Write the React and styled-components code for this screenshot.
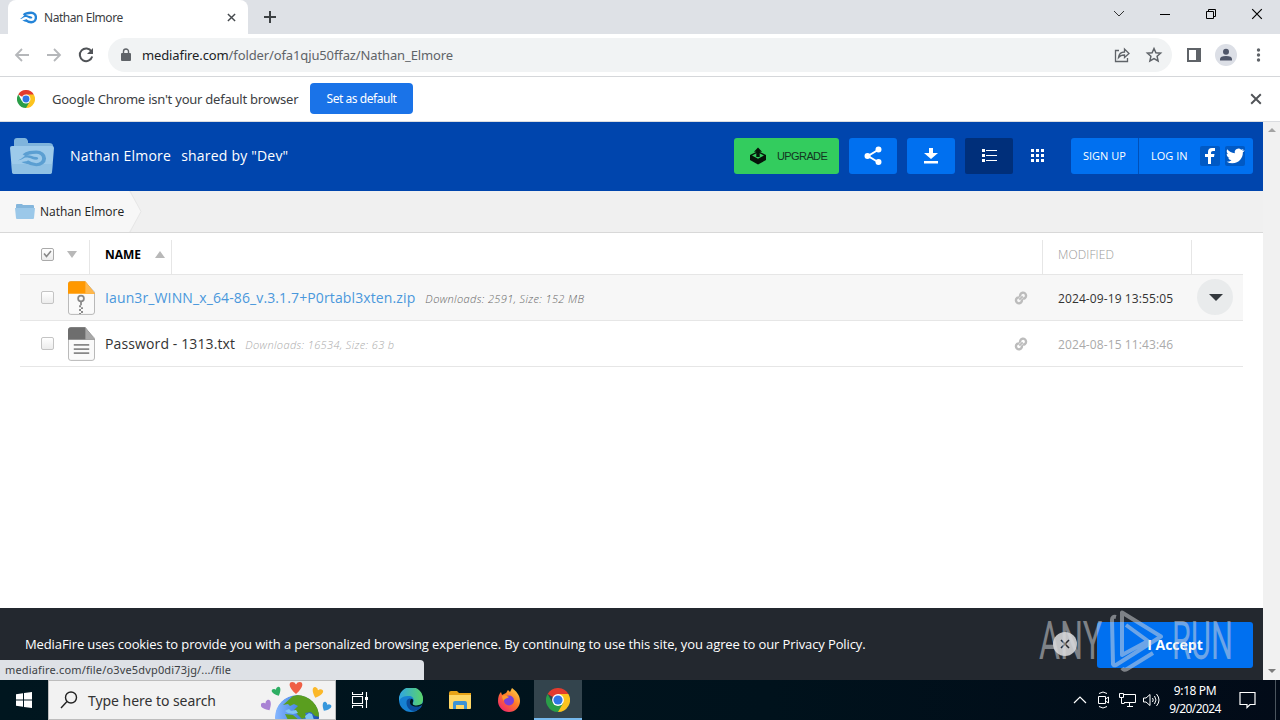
import styled, { createGlobalStyle } from "styled-components";

const GlobalStyle = createGlobalStyle`
  * {
    box-sizing: border-box;
  }

  body {
    margin: 0;
    overflow: hidden;
    font-family: "Open Sans", "Noto Sans", sans-serif;
  }

  button {
    border: 0;
    padding: 0;
    background: none;
    font: inherit;
    color: inherit;
  }

  svg {
    flex-shrink: 0;
  }
`;

const Desktop = styled.div`
  position: relative;
  display: flex;
  flex-direction: column;
  width: 1280px;
  height: 720px;
  background: white;
`;

const Text = styled.span`
  font-size: ${(p) => p.$size || 13}px;
  letter-spacing: ${(p) => p.$spacing || 0}px;
  white-space: nowrap;
`;

/* browser frame */

const TabStrip = styled.div`
  display: flex;
  height: 34px;
  padding-left: 8px;
  background: #dee1e6;
  font-family: "Noto Sans", sans-serif;
`;

const Tab = styled.div`
  display: flex;
  align-items: center;
  width: 240px;
  padding: 0 12px;
  border-radius: 8px 8px 0 0;
  background: white;
  color: #3c4043;

  span {
    flex: 1;
    margin-left: 7px;
  }
`;

const NewTab = styled.button`
  display: flex;
  align-items: center;
  margin-left: 16px;
`;

const WindowControls = styled.div`
  display: flex;
  align-items: center;
  gap: 34px;
  height: 28px;
  margin-left: auto;
  padding-right: 17px;
`;

const Toolbar = styled.div`
  display: flex;
  align-items: center;
  height: 43px;
  padding: 0 11px 1px 13px;
  border-bottom: 1px solid #d5d7da;
  background: white;
  font-family: "Noto Sans", sans-serif;
`;

const NavButtons = styled.div`
  display: flex;
  gap: 14px;
  width: 95px;
`;

const Omnibox = styled.div`
  display: flex;
  align-items: center;
  width: 1064px;
  height: 34px;
  padding: 0 9px 0 10px;
  border-radius: 17px;
  background: #f1f3f4;
  color: #5f6368;

  b {
    font-weight: 400;
    color: #202124;
  }
`;

const Url = styled(Text)`
  flex: 1;
  margin-left: 8px;
`;

const OmniboxActions = styled.div`
  display: flex;
  gap: 14px;
`;

const ToolbarActions = styled.div`
  display: flex;
  align-items: center;
  gap: 12px;
  margin-left: 13px;
`;

const InfoBar = styled.div`
  display: flex;
  align-items: center;
  height: 45px;
  padding: 0 18px 1px 17px;
  border-bottom: 1px solid #dadce0;
  color: #3c4043;
  font-family: "Noto Sans", sans-serif;
`;

const InfoText = styled(Text)`
  width: 258px;
  margin-left: 17px;
`;

const DefaultButton = styled.button`
  width: 103px;
  height: 31px;
  margin-right: auto;
  padding-bottom: 2px;
  border-radius: 4px;
  background: #1a73e8;
  color: white;
  line-height: 27px;
`;

const Viewport = styled.div`
  display: flex;
  flex: 1;
  min-height: 0;
`;

const Page = styled.main`
  display: flex;
  flex-direction: column;
  width: 1263px;
  background: white;
`;

const Scrollbar = styled.div`
  display: flex;
  flex-direction: column;
  justify-content: space-between;
  align-items: center;
  width: 17px;
  padding: 6px 0 7px;
  background: #f1f1f1;
`;

/* shared folder page */

const Header = styled.header`
  display: flex;
  align-items: center;
  height: 69px;
  padding: 0 10px 1px;
  background: #0045ad;
  color: white;
`;

const FolderTitle = styled.h1`
  display: flex;
  flex: 1;
  gap: 10px;
  margin: 0 0 1px 15px;
  font-weight: 400;
  line-height: 20px;
`;

const HeaderButton = styled.button`
  display: flex;
  align-items: center;
  justify-content: center;
  gap: 10px;
  width: ${(p) => p.$width || 48}px;
  height: 36px;
  margin-right: ${(p) => p.$gap ?? 10}px;
  border-radius: ${(p) => p.$radius ?? 3}px;
  background: ${(p) => p.$bg || "#0070f0"};
  color: ${(p) => p.$color || "white"};
`;

const UpgradeButton = styled(HeaderButton)`
  justify-content: flex-start;
  padding-left: 15px;
  font-family: "Liberation Sans", Arial, sans-serif;
`;

const Account = styled.div`
  display: flex;
  width: 182px;
  height: 36px;
  border-radius: 3px;
  background: #0070f0;
`;

const SignUp = styled.button`
  display: flex;
  align-items: center;
  width: 68px;
  padding: 0 0 1px 12px;
  border-right: 1px solid #0050b8;
`;

const LogIn = styled.div`
  display: flex;
  flex: 1;
  align-items: center;
  padding-left: 12px;

  span {
    width: 49px;
    padding-bottom: 1px;
  }

  svg + svg {
    margin-left: 5px;
  }
`;

const Breadcrumb = styled.nav`
  display: flex;
  height: 42px;
  border-bottom: 1px solid #d8d8d8;
  background: #f0f0f0;
`;

const Crumb = styled.div`
  display: flex;
  align-items: center;
  width: 129px;
  padding-left: 15px;
  background: #f7f7f7;
  color: #222;

  span {
    margin-left: 5px;
  }
`;

const FileList = styled.section`
  flex: 1;
  padding: 0 20px;
`;

const Row = styled.div`
  display: flex;
  align-items: center;
  height: ${(p) => (p.$head ? 42 : 46)}px;
  border-bottom: 1px solid #e6e6e6;
  background: ${(p) => (p.$active ? "#f7f7f7" : "white")};

  > svg:nth-child(2) {
    margin: 1px 1px 0 0;
  }
`;

const CheckCell = styled.div`
  display: flex;
  align-items: center;
  gap: 13px;
  width: ${(p) => p.$width}px;
  height: ${(p) => (p.$divider ? "34px" : "auto")};
  align-self: ${(p) => (p.$divider ? "flex-end" : "auto")};
  padding: ${(p) => (p.$divider ? "0 0 6px 21px" : "0 0 0 21px")};
  border-right: ${(p) => (p.$divider ? "1px solid #e6e6e6" : "0")};
`;

const Checkbox = styled.span`
  display: flex;
  align-items: center;
  justify-content: center;
  width: 13px;
  height: 13px;
  border: 1px solid ${(p) => (p.$checked ? "#aaa" : "#c4c4c4")};
  border-radius: 2px;
  background: linear-gradient(#fff, #ececec);
`;

const Triangle = styled.i`
  width: 0;
  height: 0;
  border: solid transparent;
  border-width: 0 ${(p) => p.$half || 5}px;
  border-${(p) => (p.$up ? "bottom" : "top")}: ${(p) => p.$height || 7}px solid ${(p) => p.$color || "#b8b8b8"};
`;

const NameHead = styled.div`
  display: flex;
  align-items: center;
  align-self: flex-end;
  justify-content: space-between;
  width: 82px;
  height: 34px;
  padding: 0 6px 6px 15px;
  border-right: 1px solid #e6e6e6;
  color: black;
  font-weight: 700;
`;

const ModifiedHead = styled.div`
  display: flex;
  align-items: center;
  align-self: flex-end;
  width: 150px;
  height: 34px;
  margin: 0 51px 0 auto;
  padding: 0 0 6px 15px;
  border: solid #e6e6e6;
  border-width: 0 1px;
  color: #999;
  font-weight: 300;
`;

const FileName = styled(Text)`
  margin: 0 10px 0 9px;
  color: ${(p) => p.$color};
`;

const FileInfo = styled(Text)`
  flex: 1;
  margin-top: 2px;
  color: ${(p) => p.$color};
  font-style: italic;
  font-weight: 300;
`;

const Modified = styled(Text)`
  width: 139px;
  margin-left: 30px;
  padding-top: 1px;
  color: ${(p) => p.$color};
`;

const MenuCell = styled.div`
  width: 46px;
  padding-bottom: 1px;
`;

const MenuButton = styled.button`
  display: flex;
  align-items: center;
  justify-content: center;
  width: 36px;
  height: 36px;
  padding: 1px 0 0 1px;
  border-radius: 50%;
  background: #e9ebec;
`;

const CookieBar = styled.footer`
  display: flex;
  align-items: center;
  height: 72px;
  padding: 1px 10px 0 25px;
  background: #23282f;
  color: white;
`;

const CookieText = styled(Text)`
  flex: 1;
  padding-bottom: 2px;
`;

const CookieClose = styled.button`
  display: flex;
  align-items: center;
  justify-content: center;
  width: 24px;
  height: 24px;
  margin: 0 20px 1px 0;
  border-radius: 50%;
  background: #c3c4c6;
`;

const Accept = styled.button`
  width: 156px;
  height: 46px;
  padding-bottom: 2px;
  border-radius: 3px;
  background: #0070f0;
  font-weight: 700;
`;

/* floats over the bottom left corner of the page */
const StatusBubble = styled.div`
  position: absolute;
  left: 0;
  bottom: 40px;
  width: 424px;
  height: 20px;
  padding-left: 5px;
  border-top-right-radius: 4px;
  background: #dee1e6;
  color: #3c4043;
  font-family: "Noto Sans", sans-serif;
  line-height: 16px;
`;

const Watermark = styled.div`
  position: absolute;
  left: 1039px;
  top: 608px;
  display: flex;
  align-items: center;
  height: 66px;
  color: #d9dbdf;
  opacity: 0.5;
`;

const WatermarkWord = styled.span`
  width: ${(p) => p.$width}px;
  font: 400 53px/66px Roboto, sans-serif;
  transform: scaleX(${(p) => p.$scale});
  transform-origin: left;
  white-space: nowrap;
`;

/* taskbar */

const Taskbar = styled.div`
  display: flex;
  height: 40px;
  background: linear-gradient(90deg, #00161f, #00121c 60%, #020b18);
  color: white;
`;

const TaskButton = styled.button`
  display: flex;
  align-items: center;
  justify-content: center;
  width: ${(p) => p.$width}px;
  border-bottom: 2px solid ${(p) => (p.$active ? "#76b9ed" : "transparent")};
  padding-top: 2px;
  background: ${(p) => (p.$active ? "#33444d" : "transparent")};
`;

const Search = styled.div`
  display: flex;
  align-items: center;
  width: 288px;
  border: 1px solid #bdbdbd;
  background: #f2f2f2;
  color: #333;
  font-family: "Noto Sans", sans-serif;

  > svg:first-child {
    margin-left: 11px;
  }

  span {
    flex: 1;
    margin-left: 10px;
  }
`;

const Tray = styled.div`
  display: flex;
  align-items: center;
  gap: 6px;
  margin-left: auto;
  padding-right: 19px;
`;

const Clock = styled.div`
  display: flex;
  flex-direction: column;
  align-items: center;
  width: 58px;
  margin: 0 9px 0 0;
  font-family: "Noto Sans", sans-serif;
  line-height: 18px;
`;

const ShowDesktop = styled.div`
  width: 5px;
  border-left: 1px solid #4b555e;
`;

const FlameShape = ({ color }) => (
  <>
    <path fill="none" stroke={color} strokeWidth="4.5" d="M7 7.500C11 3 16 3 21 3a9 9 0 0 1 0 18c-5 0-8-2-11-4.500" />
    <path fill={color} d="M0 15c6-1 6-5 12-4 4 1 5 3 9 3 3-.5 3-3.500 0-4-4-.5-6-2-10-2.500-4 0-5 4-11 7.500z" />
    <path fill={color} d="M4 17c4 0 6-2 10 0l-1 3c-3 0-6-1-9-3z" />
  </>
);

const Flame = ({ width, height, color }) => (
  <svg width={width} height={height} viewBox="0 0 32 24">
    <FlameShape color={color} />
  </svg>
);

const Cross = ({ size, color, weight = 2 }) => (
  <svg width={size} height={size} viewBox="0 0 10 10" stroke={color} strokeWidth={weight}>
    <path d="M1 1l8 8M9 1L1 9" />
  </svg>
);

const Chrome = ({ size }) => (
  <svg width={size} height={size} viewBox="0 0 24 24">
    <path fill="#e33b2e" d="M12 12L1.600 6A12 12 0 0 1 22.400 6z" />
    <path fill="#fcc31e" d="M12 12V6h10.400A12 12 0 0 1 12 24z" />
    <path fill="#2a9d48" d="M12 12l5.200 3L12 24A12 12 0 0 1 1.600 6l5.200 9z" />
    <circle cx="12" cy="12" r="5.900" fill="white" />
    <circle cx="12" cy="12" r="4.600" fill="#2f76e6" />
  </svg>
);

const Folder = () => (
  <svg width="45" height="38" viewBox="0 0 45 38">
    <path fill="#7fb4dc" d="M4 12V4q0-3 3-3h8q2 0 3 3v2h21q4 0 4 3v3z" />
    <path fill="#9dcaea" d="M0 11q0-2 2-2h40q2 0 2 2l-2 24q0 2-3 2H5q-3 0-3-2z" />
    <path fill="#84b8dd" d="M1.500 27h41l-.5 8q0 2-3 2H5q-3 0-3-2z" opacity=".5" />
    <g transform="translate(8 13) scale(.87 .7)">
      <FlameShape color="#5b9fd2" />
    </g>
  </svg>
);

const FileIcon = ({ color, fold, zip }) => (
  <svg width="27" height="34" viewBox="0 0 28 35">
    <path fill="#fafafa" stroke="#b5b5b5" d="M.5 3Q.5.500 3 .5h14.500l10 11V32q0 2.500-2.500 2.500H3Q.5 34.500.5 32z" />
    <path fill={color} d="M0 13V3q0-3 3-3h15l10 13z" />
    <path fill={fold} d="M18 0l10 13H18z" />
    {zip ? (
      <g fill="none" stroke="#888">
        <circle cx="13.500" cy="18" r="3" strokeWidth="1.800" />
        <path d="M13.500 21v4" strokeWidth="1.800" />
        <path d="M12.500 25v9M14.500 27v7" strokeWidth="2" strokeDasharray="2 2" />
      </g>
    ) : (
      <path stroke="#888" strokeWidth="1.800" d="M6 18.500h16M6 22.800h16M6 27h16" />
    )}
  </svg>
);

const LinkIcon = () => (
  <svg width="14" height="14" viewBox="0 0 14 14" fill="none" stroke="#bcbcbc" strokeWidth="2.400">
    <path d="M6.300 5.800A3 3 0 1 1 8.500 7.600" />
    <path d="M7.700 8.200A3 3 0 1 1 5.500 6.400" />
    <path d="M5.300 8.700l3.400-3.400" strokeWidth="1.800" />
  </svg>
);

const HEART = "M0 5C-7-1-6-5-3.200-5Q-1-5 0-3Q1-5 3.200-5C6-5 7-1 0 5z";

const hearts = [
  { x: 6, y: 25, turn: -30, size: 1, color: "#a983d4" },
  { x: 16, y: 11, turn: -25, size: 0.85, color: "#2eae63" },
  { x: 35, y: 7, turn: 0, size: 1.2, color: "#ef5f45" },
  { x: 56, y: 12, turn: 20, size: 1, color: "#fbb829" },
  { x: 65, y: 26, turn: 30, size: 0.85, color: "#3697dc" },
];

const Earth = () => (
  <svg width="74" height="38" viewBox="0 0 74 38">
    <defs>
      <clipPath id="globe">
        <circle cx="36" cy="36" r="22" />
      </clipPath>
      <linearGradient id="ocean" x2="1">
        <stop stopColor="#86b7ff" />
        <stop offset=".6" stopColor="#3f7fe0" />
        <stop offset="1" stopColor="#1c4fae" />
      </linearGradient>
    </defs>
    <g clipPath="url(#globe)">
      <circle cx="36" cy="36" r="22" fill="url(#ocean)" />
      <path
        fill="#5a9e1f"
        d="M22 24l10-9 10-2 10 5 7 11v7l-5-1-4-4-6 1 2 4-5 2-5-5-3-4 4-4-4-2-4 2-2-2z"
      />
      <path fill="#5a9e1f" d="M24 33l8 1 6 5H27z" />
      <path fill="#7fc3f5" d="M24 30l4-2 2 2 5-1 2 3-5 1-5-1zM44 35l4-3 3 1 2 6h-8z" />
    </g>
    {hearts.map((h) => (
      <path
        key={h.color}
        fill={h.color}
        d={HEART}
        transform={`translate(${h.x} ${h.y}) rotate(${h.turn}) scale(${h.size})`}
      />
    ))}
  </svg>
);

const Edge = () => (
  <svg width="24" height="24" viewBox="0 0 24 24">
    <defs>
      <linearGradient id="edge" x2="1">
        <stop stopColor="#2fa5e4" />
        <stop offset="1" stopColor="#5bd46a" />
      </linearGradient>
    </defs>
    <circle cx="12" cy="12" r="12" fill="#1681d3" />
    <path fill="url(#edge)" d="M0 11A12 12 0 0 1 24 11c0 5-3 7-7 7-3 0-4-1-3-3 2-3 0-7-4-7-5 0-8 1-10 5z" />
    <path fill="#0b4c9c" d="M8 12c-2 5 2 12 8 11 3-1 5-2 7-5-4 2-8 1-10-1-2-1-2-4-1-6-1-1-3 0-4 1z" />
    <path fill="#00161f" d="M12 11c-2 3-1 6 2 7 4 2 8 0 9-1l1-2c-3 3-12 4-10-1 1-2-1-4-2-3z" />
  </svg>
);

const Explorer = () => (
  <svg width="22" height="19" viewBox="0 0 22 19">
    <path fill="#e8a317" d="M0 2q0-2 2-2h6l2 2h12v5H0z" />
    <path fill="#ffd766" d="M0 4h22v13q0 1-1 1H1q-1 0-1-1z" />
    <path fill="#3c93d6" d="M4 18v-6q0-2 2-2h10q2 0 2 2v6h-3v-4H7v4z" />
  </svg>
);

const Firefox = () => (
  <svg width="24" height="24" viewBox="0 0 24 24">
    <defs>
      <linearGradient id="fox" x1="1" x2=".2" y2="1">
        <stop stopColor="#ffe14a" />
        <stop offset=".5" stopColor="#ff7a28" />
        <stop offset="1" stopColor="#f0246e" />
      </linearGradient>
    </defs>
    <path fill="url(#fox)" d="M15 0c4 3 8 7 8 13a11 11 0 0 1-22 0C1 9 2 6 4 4l1 3 4-2c1-1 1-2 2-3l2 2z" />
    <circle cx="12" cy="12.500" r="5" fill="#7b3fd8" />
    <path fill="#ff9a2b" d="M5 8c3-2 5 0 7 1-2 2-5 1-5 4-1-1-2-3-2-5z" />
  </svg>
);

const files = [
  {
    name: "Iaun3r_WINN_x_64-86_v.3.1.7+P0rtabl3xten.zip",
    info: "Downloads: 2591, Size: 152 MB",
    modified: "2024-09-19 13:55:05",
    zip: true,
    active: true,
  },
  {
    name: "Password - 1313.txt",
    info: "Downloads: 16534, Size: 63 b",
    modified: "2024-08-15 11:43:46",
  },
];

const FileRow = ({ file }) => (
  <Row $active={file.active}>
    <CheckCell $width={48}>
      <Checkbox />
    </CheckCell>
    <FileIcon zip={file.zip} color={file.zip ? "#ff9800" : "#6e6e6e"} fold={file.zip ? "#ffb84d" : "#a8a8a8"} />
    <FileName $size={14} $spacing={0.12} $color={file.active ? "#4a98dc" : "#333"}>
      {file.name}
    </FileName>
    <FileInfo $size={11} $spacing={0.38} $color={file.active ? "#666" : "#aaa"}>
      {file.info}
    </FileInfo>
    <LinkIcon />
    <Modified $size={12} $spacing={0.1} $color={file.active ? "#333" : "#aaa"}>
      {file.modified}
    </Modified>
    <MenuCell>
      {file.active && (
        <MenuButton>
          <Triangle $half={7} $height={7} $color="#33383d" />
        </MenuButton>
      )}
    </MenuCell>
  </Row>
);

const Browser = () => (
  <>
    <TabStrip>
      <Tab>
        <Flame width={17} height={13} color="#2484d8" />
        <Text $size={12} $spacing={-0.45}>
          Nathan Elmore
        </Text>
        <Cross size={9} color="#45494d" weight={1.6} />
      </Tab>
      <NewTab>
        <svg width="12" height="12" stroke="#3c4043" strokeWidth="2">
          <path d="M6 0v12M0 6h12" />
        </svg>
      </NewTab>
      <WindowControls>
        <svg width="12" height="8" fill="none" stroke="#333">
          <path d="M1 1l5 5 5-5" />
        </svg>
        <svg width="12" height="10" stroke="black">
          <path d="M1 5.500h10" />
        </svg>
        <svg width="12" height="12" fill="none" stroke="black">
          <path d="M1.500 3.500h7v7h-7zM3.500 3V1.500h7v7H9" />
        </svg>
        <Cross size={12} color="black" weight={1} />
      </WindowControls>
    </TabStrip>
    <Toolbar>
      <NavButtons>
        <svg width="18" height="18" fill="none" stroke="#b5b7ba" strokeWidth="1.800">
          <path d="M16 9H3M9 3L3 9l6 6" />
        </svg>
        <svg width="18" height="18" fill="none" stroke="#b5b7ba" strokeWidth="1.800">
          <path d="M2 9h13M9 3l6 6-6 6" />
        </svg>
        <svg width="18" height="18" fill="none" stroke="#505357" strokeWidth="2">
          <path d="M14.500 5.500A6.300 6.300 0 1 0 15.200 10.500" />
          <path d="M16 2v6h-6z" fill="#505357" stroke="none" />
        </svg>
      </NavButtons>
      <Omnibox>
        <svg width="16" height="16" fill="#5f6368">
          <path d="M4 6h8q1 0 1 1v6q0 1-1 1H4q-1 0-1-1V7q0-1 1-1z" />
          <path d="M5.500 7V4.500a2.500 2.500 0 0 1 5 0V7" fill="none" stroke="#5f6368" strokeWidth="1.400" />
        </svg>
        <Url $size={13} $spacing={-0.12}>
          <b>mediafire.com</b>/folder/ofa1qju50ffaz/Nathan_Elmore
        </Url>
        <OmniboxActions>
          <svg width="18" height="18" fill="none" stroke="#5f6368" strokeWidth="1.300">
            <path d="M6 4.500H2.500v11h12V12" />
            <path d="M5.500 11.500c.5-4 3-5.500 6-5.500V3l4.500 4.500-4.500 4V9c-3 0-4.500.5-6 2.500z" />
          </svg>
          <svg width="18" height="18" fill="none" stroke="#5f6368" strokeWidth="1.500">
            <path d="M9 2.500l1.900 4.300 4.700.4-3.500 3.100 1 4.600L9 12.500l-4.100 2.400 1-4.600-3.500-3.100 4.700-.4z" />
          </svg>
        </OmniboxActions>
      </Omnibox>
      <ToolbarActions>
        <svg width="18" height="18">
          <path fill="#5f6368" d="M2 2h14v14H2z" />
          <path fill="white" d="M4 4h7v10H4z" />
        </svg>
        <svg width="22" height="22">
          <circle cx="11" cy="11" r="11" fill="#dcdfe6" />
          <circle cx="11" cy="7.800" r="3" fill="#4e5568" />
          <path fill="#4e5568" d="M5 16.500v-1.500q0-3 6-3t6 3v1.500z" />
        </svg>
        <svg width="20" height="18" fill="#5f6368">
          <circle cx="9.500" cy="4" r="1.700" />
          <circle cx="9.500" cy="9" r="1.700" />
          <circle cx="9.500" cy="14" r="1.700" />
        </svg>
      </ToolbarActions>
    </Toolbar>
    <InfoBar>
      <Chrome size={18} />
      <InfoText $size={13} $spacing={-0.23}>
        Google Chrome isn't your default browser
      </InfoText>
      <DefaultButton>
        <Text $size={12} $spacing={-0.45}>
          Set as default
        </Text>
      </DefaultButton>
      <Cross size={12} color="#505357" weight={1.6} />
    </InfoBar>
  </>
);

const SharedFolder = () => (
  <Page>
    <Header>
      <Folder />
      <FolderTitle>
        <Text $size={14} $spacing={0.23}>
          Nathan Elmore
        </Text>
        <Text $size={14} $spacing={0.2}>
          shared by "Dev"
        </Text>
      </FolderTitle>
      <UpgradeButton $width={105} $bg="#33cc5e" $color="#14341f">
        <svg width="18" height="18" viewBox="0 0 18 18" fill="#06140a">
          <path d="M1 8l8-4 8 4v5l-8 4.500L1 13z" />
          <path fill="#33cc5e" d="M3 8.500l6-3 6 3-6 3.300z" />
          <path d="M9 .5l4 4.300h-2.300V10H7.300V4.800H5z" />
        </svg>
        <Text $size={11} $spacing={-0.6}>
          UPGRADE
        </Text>
      </UpgradeButton>
      <HeaderButton>
        <svg width="18" height="20" fill="white" stroke="white" strokeWidth="2">
          <path d="M14 4L4 10l10 6" fill="none" />
          <circle cx="14.500" cy="3.500" r="2" />
          <circle cx="3.500" cy="10" r="2" />
          <circle cx="14.500" cy="16" r="2" />
        </svg>
      </HeaderButton>
      <HeaderButton>
        <svg width="14" height="16" fill="white">
          <path d="M5 0h4v5h5l-7 6-7-6h5zM0 13h14v2.500H0z" />
        </svg>
      </HeaderButton>
      <HeaderButton $bg="#002f7a" $radius={2} $gap={0}>
        <svg width="16" height="14" fill="white">
          <path d="M1 0h3v3H1zM1 5h3v3H1zM1 10h3v3H1zM5 1h11v1H5zM5 6h11v1H5zM5 11h11v1H5z" />
        </svg>
      </HeaderButton>
      <HeaderButton $bg="transparent">
        <svg width="14" height="14" fill="white">
          <path d="M1 0h3v3H1zM6 0h3v3H6zM11 0h3v3h-3zM1 5h3v3H1zM6 5h3v3H6zM11 5h3v3h-3zM1 10h3v3H1zM6 10h3v3H6zM11 10h3v3h-3z" />
        </svg>
      </HeaderButton>
      <Account>
        <SignUp>
          <Text $size={11}>SIGN UP</Text>
        </SignUp>
        <LogIn>
          <Text $size={11}>LOG IN</Text>
          <svg width="20" height="20">
            <rect width="20" height="20" rx="2" fill="#0059c4" />
            <path fill="white" d="M8 18v-7H5V8h3V6q0-4 4-4h3v3h-2q-2 0-2 1.500V8h3.500l-.5 3h-3v7z" />
          </svg>
          <svg width="20" height="20">
            <rect width="20" height="20" rx="2" fill="#0059c4" />
            <path
              fill="white"
              transform="translate(1 1) scale(.75)"
              d="M23.953 4.570a10 10 0 0 1-2.825.775 4.958 4.958 0 0 0 2.163-2.723 9.900 9.900 0 0 1-3.127 1.184 4.920 4.920 0 0 0-8.384 4.482C7.690 8.095 4.067 6.130 1.640 3.162a4.822 4.822 0 0 0-.666 2.475c0 1.710.87 3.213 2.188 4.096a4.904 4.904 0 0 1-2.228-.616v.06a4.923 4.923 0 0 0 3.946 4.827 4.996 4.996 0 0 1-2.212.085 4.936 4.936 0 0 0 4.604 3.417A9.867 9.867 0 0 1 .96 19.540 13.995 13.995 0 0 0 8.500 21.750c9.142 0 14.307-7.721 13.995-14.646a9.936 9.936 0 0 0 2.457-2.534z"
            />
          </svg>
        </LogIn>
      </Account>
    </Header>
    <Breadcrumb>
      <Crumb>
        <svg width="20" height="17">
          <path fill="#84b6dc" d="M1 5V2q0-1 1-1h5l1 1h10q1 0 1 1v3z" />
          <path fill="#9bc8e9" d="M0 5h20l-1 10q0 1-1 1H2q-1 0-1-1z" />
        </svg>
        <Text $size={12}>Nathan Elmore</Text>
      </Crumb>
      <svg width="14" height="41">
        <path fill="#f7f7f7" d="M0 0l12 20.500L0 41z" />
        <path fill="none" stroke="#e6e6e6" d="M1 0l11 20.500L1 41" />
      </svg>
    </Breadcrumb>
    <FileList>
      <Row $head>
        <CheckCell $width={70} $divider>
          <Checkbox $checked>
            <svg width="9" height="8" fill="none" stroke="#888" strokeWidth="1.600">
              <path d="M1 3.500l2.500 3L8 1" />
            </svg>
          </Checkbox>
          <Triangle />
        </CheckCell>
        <NameHead>
          <Text $size={12}>NAME</Text>
          <Triangle $up />
        </NameHead>
        <ModifiedHead>
          <Text $size={12} $spacing={0.1}>
            MODIFIED
          </Text>
        </ModifiedHead>
      </Row>
      {files.map((file) => (
        <FileRow key={file.name} file={file} />
      ))}
    </FileList>
    <CookieBar>
      <CookieText $size={13} $spacing={-0.11}>
        MediaFire uses cookies to provide you with a personalized browsing experience. By continuing to use this site,
        you agree to our Privacy Policy.
      </CookieText>
      <CookieClose>
        <Cross size={10} color="#23282f" weight={1.6} />
      </CookieClose>
      <Accept>
        <Text $size={14}>I Accept</Text>
      </Accept>
    </CookieBar>
  </Page>
);

const Windows = () => (
  <Taskbar>
    <TaskButton $width={48}>
      <svg width="16" height="16" fill="white">
        <path d="M0 2.200L7 1.200v6.300H0zM8 1l8-1v7.500H8zM0 8.500h7v6.300L0 13.800zM8 8.500h8V16l-8-1z" />
      </svg>
    </TaskButton>
    <Search>
      <svg width="18" height="18" fill="none" stroke="#222" strokeWidth="1.400">
        <circle cx="11" cy="6.500" r="5.500" />
        <path d="M7 10.500L1 17" />
      </svg>
      <Text $size={14} $spacing={-0.05}>
        Type here to search
      </Text>
      <Earth />
    </Search>
    <TaskButton $width={48}>
      <svg width="17" height="16" fill="none" stroke="white" strokeWidth="1.100">
        <path d="M.5 0v2.500h10V0M.5 16v-2.500h10V16M.5 4.500h10v7H.5zM14.500 0v16" />
        <path d="M13 5h3v3h-3z" fill="white" stroke="none" />
      </svg>
    </TaskButton>
    <TaskButton $width={53}>
      <Edge />
    </TaskButton>
    <TaskButton $width={46}>
      <Explorer />
    </TaskButton>
    <TaskButton $width={51}>
      <Firefox />
    </TaskButton>
    <TaskButton $width={48} $active>
      <Chrome size={24} />
    </TaskButton>
    <Tray>
      <svg width="14" height="18" fill="none" stroke="white" strokeWidth="1.200">
        <path d="M1 12l6-6 6 6" />
      </svg>
      <svg width="20" height="20" fill="none" stroke="white">
        <path d="M5.500 6.500h7v7h-7zM12.500 9l3-2v6l-3-2M6 3.500q4-3 8 0M6 16.500q4 3 8 0" />
      </svg>
      <svg width="17" height="18" fill="none" stroke="white">
        <path d="M5 3.500h11.500v8H5M8 15.500h6M10.500 12v3M.5 2.500h4v4h-4zM2.500 6.500v6h3" />
      </svg>
      <svg width="18" height="18" fill="none" stroke="white">
        <path d="M1.500 7v4h2.500l4 3.500v-11L4 7zM10.500 7q1.500 2 0 4M12.500 5q3 4 0 8M14.500 3q5 6 0 12" />
      </svg>
      <Clock>
        <Text $size={12} $spacing={-0.4}>
          9:18 PM
        </Text>
        <Text $size={12} $spacing={-0.6}>
          9/20/2024
        </Text>
      </Clock>
      <svg width="17" height="18" fill="none" stroke="white" strokeWidth="1.200">
        <path d="M1 1.500h15v12h-5l-3 3v-3H1z" />
      </svg>
    </Tray>
    <ShowDesktop />
  </Taskbar>
);

const App = () => {
  return (
    <Desktop>
      <GlobalStyle />
      <Browser />
      <Viewport>
        <SharedFolder />
        <Scrollbar>
          <Triangle $up $half={4} $height={4} $color="#a3a3a3" />
          <Triangle $half={4} $height={4} $color="#7d7d7d" />
        </Scrollbar>
      </Viewport>
      <Windows />
      <StatusBubble>
        <Text $size={11} $spacing={0.16}>
          mediafire.com/file/o3ve5dvp0di73jg/.../file
        </Text>
      </StatusBubble>
      <Watermark>
        <WatermarkWord $width={70} $scale={0.61}>
          ANY
        </WatermarkWord>
        <svg width="63" height="62" fill="none" stroke="currentColor" strokeWidth="4" strokeLinejoin="round">
          <path d="M7 7Q3 6 3 10l1 44q1 2 3 1l45-28.500L13 2.500V45l26-14-22-16M13 58q2 3 5 1l26-16" />
        </svg>
        <WatermarkWord $width={62} $scale={0.58}>
          RUN
        </WatermarkWord>
      </Watermark>
    </Desktop>
  );
};

export default App;
